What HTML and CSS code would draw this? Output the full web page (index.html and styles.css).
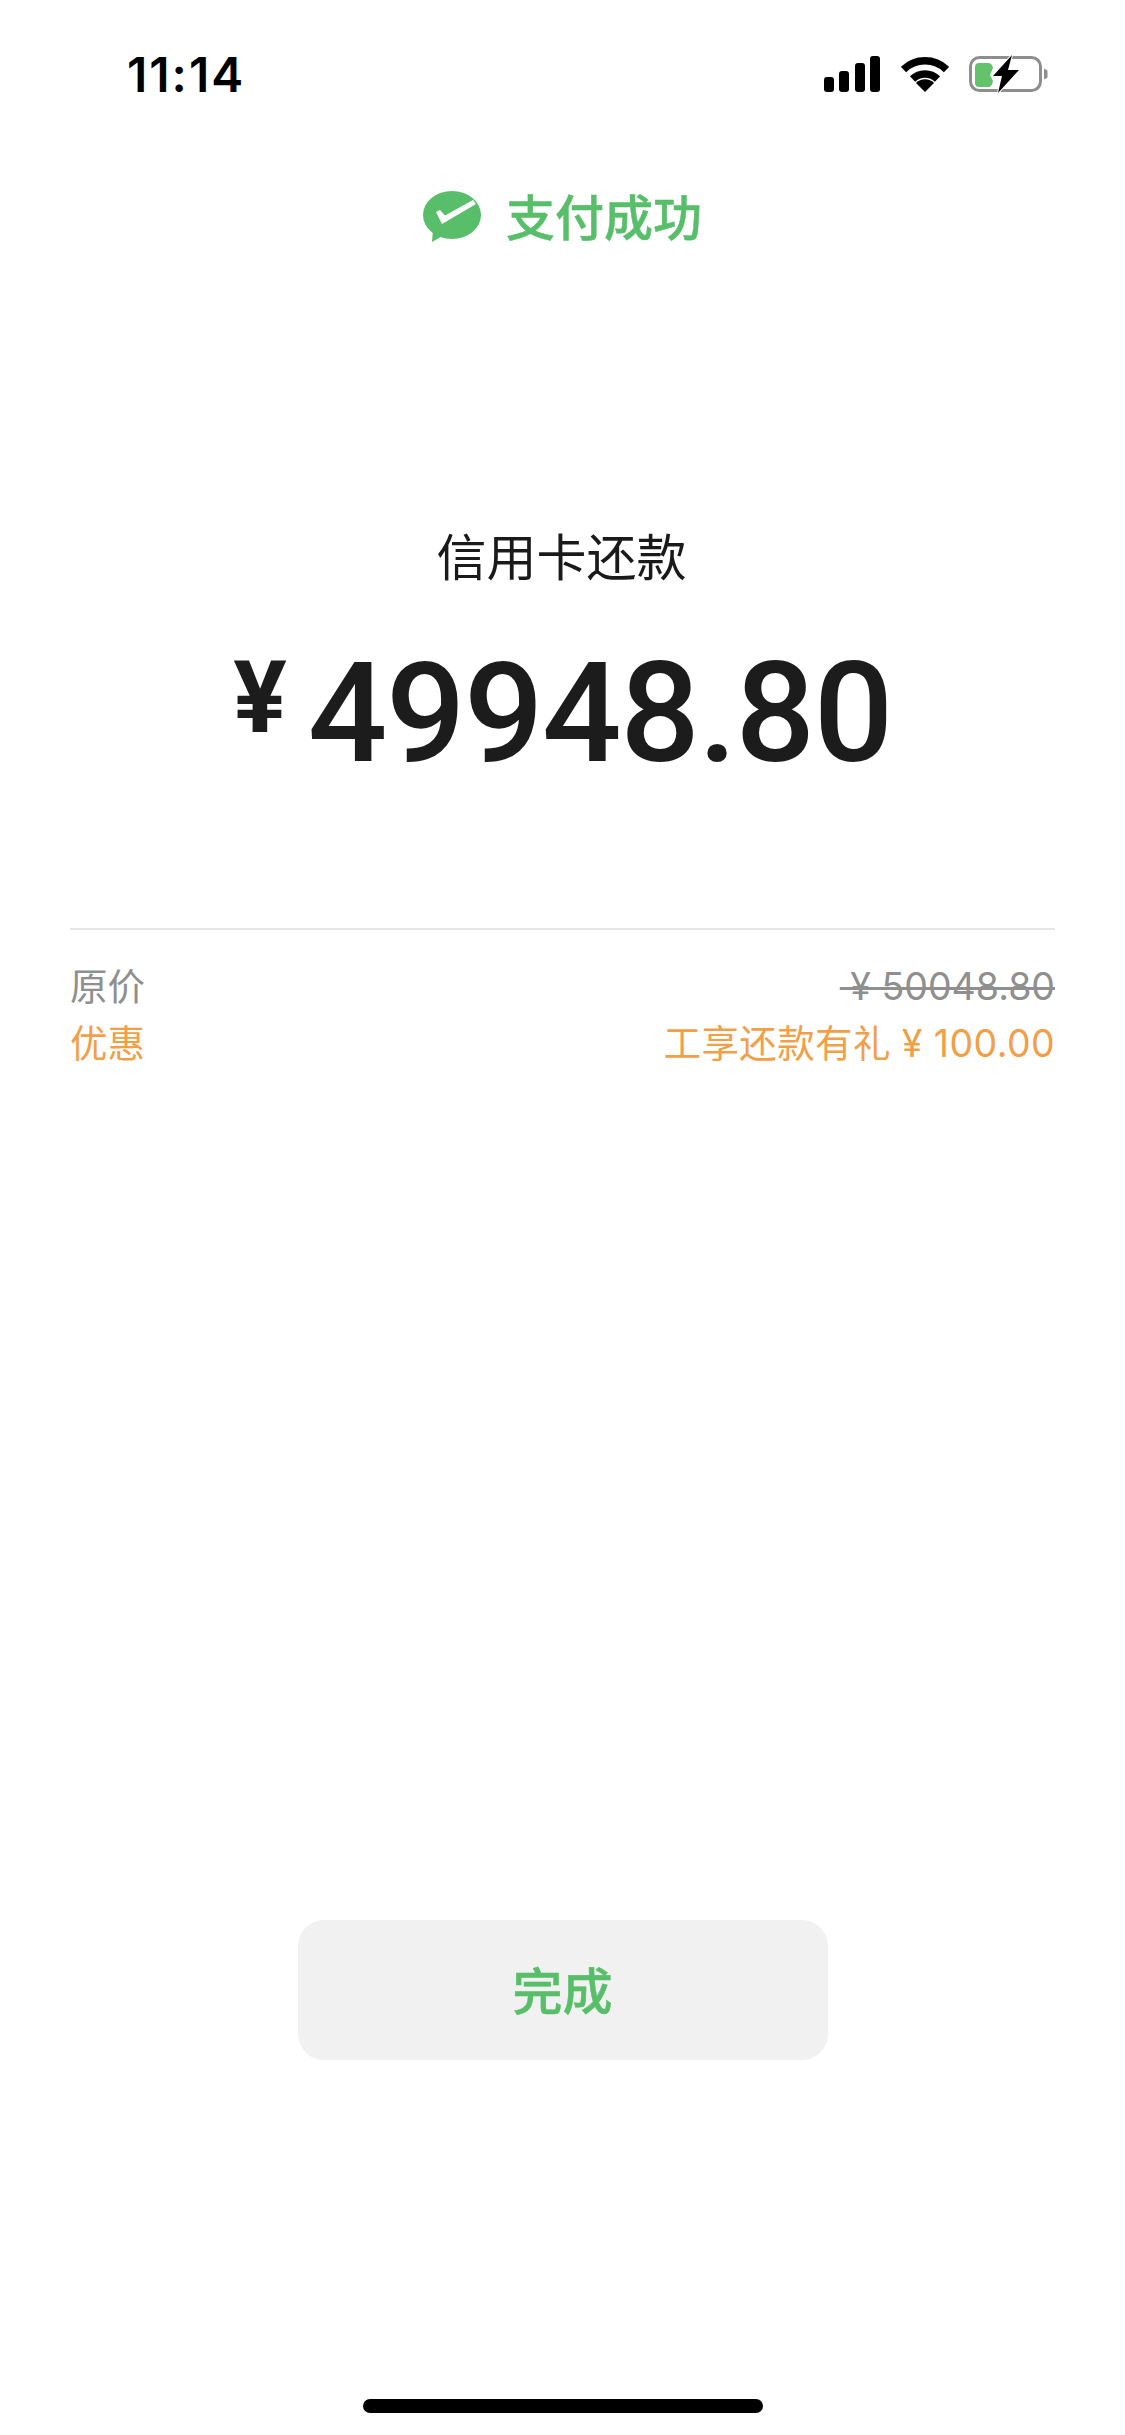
FILE: index.html
```html
<!DOCTYPE html>
<html lang="zh-CN">
<head>
    <meta charset="UTF-8">
    <meta name="viewport" content="width=device-width, initial-scale=1.0">
    <title>支付成功</title>
    <link rel="stylesheet" href="styles.css">
</head>
<body>
    <div class="page">
        <div class="status-bar">
            <span class="time">11:14</span>
            <div class="status-icons">
                <svg class="icon-signal" width="57" height="36" viewBox="0 0 57 36">
                    <rect x="0" y="21" width="10" height="15" rx="3"/>
                    <rect x="15" y="15" width="10" height="21" rx="3"/>
                    <rect x="31" y="7" width="10" height="29" rx="3"/>
                    <rect x="46" y="0" width="10" height="36" rx="3"/>
                </svg>
                <svg class="icon-wifi" width="48" height="36" viewBox="0 0 48 36">
                    <path d="M2.500 13.500A31 31 0 0 1 45.500 13.500" fill="none" stroke="#000" stroke-width="7.500"/>
                    <path d="M11.500 23A18 18 0 0 1 36.500 23" fill="none" stroke="#000" stroke-width="7.500"/>
                    <path d="M24 36L15 27A12.700 12.700 0 0 1 33 27Z"/>
                </svg>
                <svg class="icon-battery" width="79" height="38" viewBox="0 0 79 38">
                    <rect x="1.500" y="2.500" width="70" height="33" rx="9" fill="none" stroke="#8e8e8e" stroke-width="3"/>
                    <path d="M75 13.500L78.500 15.500V22.500L75 24.500Z" fill="#8e8e8e"/>
                    <path d="M10 8H19Q23 8 24 13L21 20L24 26Q23 32 19 32H10Q6 32 6 28V12Q6 8 10 8Z" fill="#62c36c"/>
                    <path d="M43 0L24 21H33L29 38L50 15H39Z" stroke="#fff" stroke-width="2" paint-order="stroke"/>
                </svg>
            </div>
        </div>

        <div class="result">
            <svg class="icon-wepay" width="58" height="52" viewBox="0 0 58 52">
                <ellipse cx="29" cy="24" rx="29" ry="24" fill="#58be6a"/>
                <path d="M10 38L9 51L21 44Z" fill="#58be6a"/>
                <path d="M13 21L17 19L22 24.500L50 9L53 13L19 33Z" fill="#fff"/>
            </svg>
            <span class="result-text">支付成功</span>
        </div>

        <div class="merchant">信用卡还款</div>
        <div class="amount">
            <span class="amount-sign">¥</span>
            <span class="amount-value">49948.80</span>
        </div>

        <div class="detail">
            <div class="detail-row row-gray">
                <span>原价</span>
                <span class="old-price">&nbsp;¥ 50048.80</span>
            </div>
            <div class="detail-row row-orange">
                <span>优惠</span>
                <span class="discount">工享还款有礼 ¥ 100.00</span>
            </div>
        </div>

        <div class="button-container">
            <button class="done-btn">完成</button>
        </div>

        <div class="home-bar"></div>
    </div>
</body>
</html>
```

FILE: styles.css
```css
body {
    margin: 0;
    background-color: #fff;
    font-family: Inter, "Noto Sans CJK SC", sans-serif;
}
.page {
    height: 2435px;
    display: flex;
    flex-direction: column;
    overflow: hidden;
}
.status-bar {
    height: 36px;
    margin-top: 56px;
    padding: 0 77px 0 127px;
    display: flex;
    justify-content: space-between;
    align-items: center;
}
.time {
    font-size: 48px;
    font-weight: 600;
    letter-spacing: 2px;
    color: #000;
}
.status-icons {
    display: flex;
    align-items: center;
    gap: 20px;
}
.result {
    margin-top: 99px;
    height: 52px;
    display: flex;
    justify-content: center;
    align-items: center;
    gap: 25px;
}
.result-text {
    padding-bottom: 6px;
    font-size: 49px;
    font-weight: 500;
    color: #58be6a;
    -webkit-text-stroke: 0.5px #58be6a;
}
.merchant {
    margin-top: 285px;
    padding-right: 2px;
    font-size: 50px;
    line-height: 60px;
    text-align: center;
    color: #1a1a1a;
}
.amount {
    margin-top: 60px;
    display: flex;
    justify-content: center;
    align-items: flex-start;
    gap: 21px;
    color: #1c1c1c;
    font-family: Roboto, sans-serif;
    font-weight: 500;
}
.amount-sign {
    font-size: 100px;
    line-height: 100px;
    font-weight: 700;
}
.amount-value {
    font-size: 140px;
    line-height: 130px;
    letter-spacing: -1.500px;
}
.detail {
    margin: 150px 70px 0;
    border-top: 2px solid #e6e6e6;
    padding-top: 26px;
}
.detail-row {
    height: 57px;
    display: flex;
    justify-content: space-between;
    align-items: baseline;
    font-size: 37.500px;
}
.row-gray {
    color: #8f8f8f;
}
.row-orange {
    color: #f19f48;
}
.old-price {
    text-decoration: line-through;
    text-decoration-thickness: 3px;
}
.discount {
    letter-spacing: 0.400px;
}
.button-container {
    margin-top: 850px;
    text-align: center;
}
.done-btn {
    width: 530px;
    height: 140px;
    padding: 0 0 5px;
    border: none;
    border-radius: 26px;
    background-color: #f1f1f1;
    color: #58be6a;
    font-family: inherit;
    font-size: 50px;
    font-weight: 500;
    -webkit-text-stroke: 0.5px #58be6a;
}
.home-bar {
    width: 400px;
    height: 14px;
    margin: 339px auto 0;
    border-radius: 7px;
    background-color: #000;
}
```
